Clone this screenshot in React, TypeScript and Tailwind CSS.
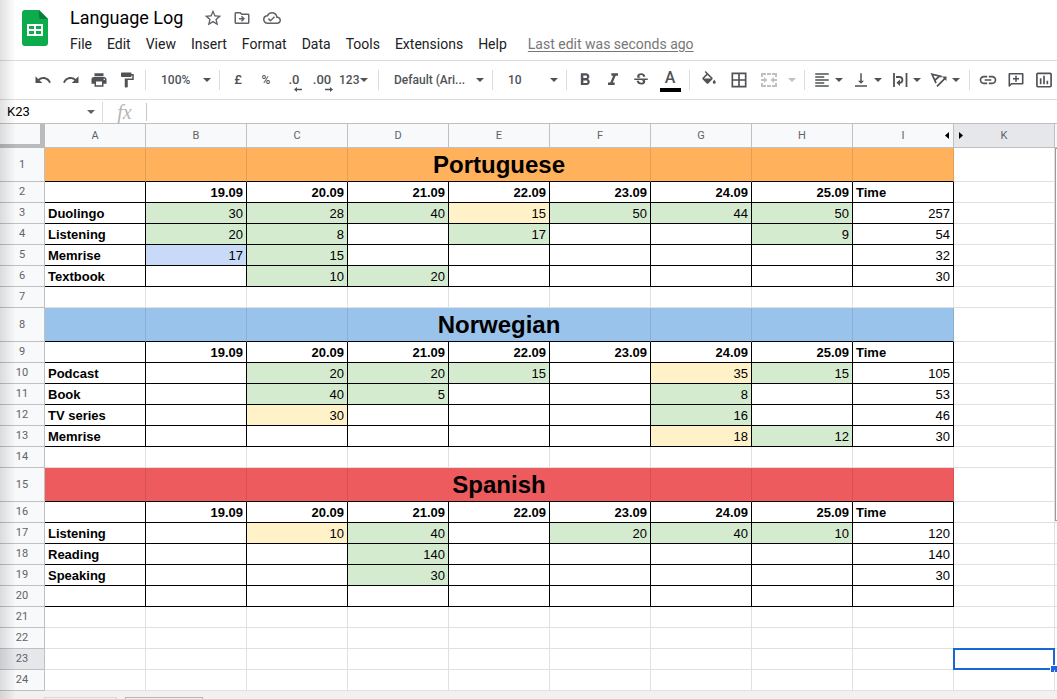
import React, { useState } from 'react';
import {
  MdUndo,
  MdRedo,
  MdPrint,
  MdFormatPaint,
  MdFormatBold,
  MdFormatItalic,
  MdStrikethroughS,
  MdBorderAll,
  MdFormatAlignLeft,
  MdVerticalAlignBottom,
  MdLink,
  MdStarBorder,
  MdOutlineDriveFileMove,
  MdOutlineCloudDone,
  MdInsertChartOutlined,
} from 'react-icons/md';

type Tone = 'g' | 'y' | 'b';
type Entry = [number, Tone] | null;

interface LogRow {
  label: string;
  entries: Entry[];
  total?: number;
}

interface Section {
  title: string;
  color: string;
  rows: LogRow[];
}

const TONES: Record<Tone, string> = {
  g: 'bg-[#d5ebd0]',
  y: 'bg-[#fff2c8]',
  b: 'bg-[#c9daf8]',
};

const DATES = ['19.09', '20.09', '21.09', '22.09', '23.09', '24.09', '25.09'];
const COLUMNS = ['A', 'B', 'C', 'D', 'E', 'F', 'G', 'H', 'I', 'K'];
const MENUS = ['File', 'Edit', 'View', 'Insert', 'Format', 'Data', 'Tools', 'Extensions', 'Help'];

const SECTIONS: Section[] = [
  {
    title: 'Portuguese',
    color: 'bg-[#ffb15c]',
    rows: [
      { label: 'Duolingo', entries: [[30, 'g'], [28, 'g'], [40, 'g'], [15, 'y'], [50, 'g'], [44, 'g'], [50, 'g']], total: 257 },
      { label: 'Listening', entries: [[20, 'g'], [8, 'g'], null, [17, 'g'], null, null, [9, 'g']], total: 54 },
      { label: 'Memrise', entries: [[17, 'b'], [15, 'g'], null, null, null, null, null], total: 32 },
      { label: 'Textbook', entries: [null, [10, 'g'], [20, 'g'], null, null, null, null], total: 30 },
    ],
  },
  {
    title: 'Norwegian',
    color: 'bg-[#99c3ea]',
    rows: [
      { label: 'Podcast', entries: [null, [20, 'g'], [20, 'g'], [15, 'g'], null, [35, 'y'], [15, 'g']], total: 105 },
      { label: 'Book', entries: [null, [40, 'g'], [5, 'g'], null, null, [8, 'g'], null], total: 53 },
      { label: 'TV series', entries: [null, [30, 'y'], null, null, null, [16, 'g'], null], total: 46 },
      { label: 'Memrise', entries: [null, null, null, null, null, [18, 'y'], [12, 'g']], total: 30 },
    ],
  },
  {
    title: 'Spanish',
    color: 'bg-[#ee5b5e]',
    rows: [
      { label: 'Listening', entries: [null, [10, 'y'], [40, 'g'], null, [20, 'g'], [40, 'g'], [10, 'g']], total: 120 },
      { label: 'Reading', entries: [null, null, [140, 'g'], null, null, null, null], total: 140 },
      { label: 'Speaking', entries: [null, null, [30, 'g'], null, null, null, null], total: 30 },
      { label: '', entries: [null, null, null, null, null, null, null] },
    ],
  },
];

const plainCell = 'p-0 border-r border-b border-[#e0e0e0]';
const inkCell = 'px-[3px] pt-0.5 pb-0 border-r border-b border-black leading-[18px]';

const Caret = ({ className = '' }: { className?: string }) => (
  <svg viewBox="0 0 8 4" className={`w-2 h-1 shrink-0 fill-current ${className}`} aria-hidden="true">
    <path d="M0 0h8L4 4z" />
  </svg>
);

const Divider = () => <div className="w-px h-5 mx-1 shrink-0 bg-[#dadce0]" />;

interface ToolProps {
  label: string;
  wide?: boolean;
  children: React.ReactNode;
}

const Tool = ({ label, wide, children }: ToolProps) => (
  <button
    aria-label={label}
    className={`${wide ? 'w-[30px]' : 'w-7'} h-7 shrink-0 flex items-center justify-center rounded-sm hover:bg-gray-100`}
  >
    {children}
  </button>
);

const MenuTool = ({ label, children }: ToolProps) => (
  <button aria-label={label} className="w-[39px] h-7 pl-1 gap-1 shrink-0 flex items-center rounded-sm hover:bg-gray-100">
    {children}
    <Caret />
  </button>
);

interface PickerProps {
  label: string;
  value: string;
  options: string[];
  width: string;
  onChange: (value: string) => void;
}

const Picker = ({ label, value, options, width, onChange }: PickerProps) => (
  <div className={`relative h-7 shrink-0 flex items-center ${width}`}>
    <select
      aria-label={label}
      value={value}
      onChange={(e) => onChange(e.target.value)}
      className="appearance-none w-full h-full pl-[11px] pr-4 bg-transparent text-xs font-medium"
    >
      {options.map((o) => (
        <option key={o}>{o}</option>
      ))}
    </select>
    <Caret className="absolute right-1 pointer-events-none" />
  </div>
);

const DecimalIcon = ({ text, increase }: { text: string; increase?: boolean }) => (
  <span className="relative text-[13px] leading-5 font-medium">
    {text}
    <svg viewBox="0 0 8 5" className="absolute -right-0.5 -bottom-0.5 w-2 h-[5px] fill-current">
      {increase ? <path d="M5 0l3 2.5L5 5V3.3H0V1.7h5z" /> : <path d="M3 0L0 2.5 3 5V3.3h5V1.7H3z" />}
    </svg>
  </span>
);

const FillIcon = () => (
  <svg viewBox="0 0 24 24" className="w-[18px] h-[18px] fill-current">
    <path d="M16.560 8.940L7.620 0 6.210 1.410l2.380 2.380-5.150 5.150c-.59.59-.59 1.540 0 2.120l5.500 5.500c.29.29.68.44 1.060.44s.77-.15 1.060-.44l5.500-5.500c.59-.58.59-1.530 0-2.120zM5.210 10L10 5.210 14.790 10zM19 11.500s-2 2.170-2 3.500a2 2 0 004 0c0-1.330-2-3.500-2-3.500z" />
  </svg>
);

const MergeIcon = () => (
  <svg viewBox="0 0 18 18" className="w-[18px] h-[18px] fill-current">
    <path d="M1 2h5v2H3v2H1zM7 2h4v2H7zM12 2h5v4h-2V4h-3zM1 12h2v2h3v2H1zM7 14h4v2H7zM12 14h3v-2h2v4h-5z" />
    <path d="M1 8h3V6l3.500 3L4 12v-2H1zM17 8h-3V6l-3.500 3 3.500 3v-2h3z" />
  </svg>
);

const WrapIcon = () => (
  <svg viewBox="0 0 18 18" className="w-[18px] h-[18px] shrink-0" fill="none" stroke="currentColor" strokeWidth="1.800">
    <path d="M3 2v14M15.500 2v14M5 6h3.500a2.800 2.800 0 010 5.800H7.500" />
    <path d="M9 8.500v6.600L5.400 11.800z" fill="currentColor" stroke="none" />
  </svg>
);

const RotateIcon = () => (
  <svg viewBox="0 0 18 18" className="w-[18px] h-[18px] shrink-0" fill="none" stroke="currentColor" strokeWidth="1.700">
    <path d="M11.800 5.600L2 3.200l4 9M9.200 5.300l-4.600 4.200M7 15.300l8-8" />
    <path d="M16.500 5.500v4.600l-4.600-4.600z" fill="currentColor" stroke="none" />
  </svg>
);

const CommentIcon = () => (
  <svg viewBox="0 0 18 18" className="w-[18px] h-[18px]" fill="none" stroke="currentColor" strokeWidth="1.600">
    <path d="M2.300 15V2.800h13.400v9.900H4.500z" strokeLinejoin="round" />
    <path d="M9 4.800v6M6 7.800h6" />
  </svg>
);

const SheetsLogo = () => (
  <svg viewBox="0 0 26 36" className="w-[26px] h-9 shrink-0">
    <path d="M3 0h14l9 9v24a3 3 0 01-3 3H3a3 3 0 01-3-3V3a3 3 0 013-3z" fill="#0cac4c" />
    <path d="M17 0l9 9h-7a2 2 0 01-2-2z" fill="#087f38" />
    <path d="M5 14h16v12H5zM7 16v3h5v-3zm7 0v3h5v-3zM7 21v3h5v-3zm7 0v3h5v-3z" fill="#fff" fillRule="evenodd" />
  </svg>
);

const Header = () => {
  const [name, setName] = useState('Language Log');

  return (
    <header className="flex h-[61px] shrink-0 border-b border-[#dadce0] pl-[22px] pt-2.5">
      <SheetsLogo />
      <div className="ml-[22px] -mt-1 min-w-0">
        <div className="flex items-center gap-2.5 h-6 text-[#5f6368]">
          <input
            aria-label="Document name"
            value={name}
            onChange={(e) => setName(e.target.value)}
            className="w-[123px] text-lg leading-6 text-black bg-transparent"
          />
          <button aria-label="Star"><MdStarBorder size={20} /></button>
          <button aria-label="Move"><MdOutlineDriveFileMove size={18} /></button>
          <button aria-label="Saved to drive" className="ml-0.5"><MdOutlineCloudDone size={18} /></button>
        </div>
        <nav className="flex items-center gap-[15px] h-5 mt-1 text-sm text-[#202124] whitespace-nowrap">
          {MENUS.map((m) => (
            <button key={m}>{m}</button>
          ))}
          <a href="#history" className="ml-1.5 text-[#777] underline underline-offset-2">
            Last edit was seconds ago
          </a>
        </nav>
      </div>
    </header>
  );
};

const Toolbar = () => {
  const [zoom, setZoom] = useState('100%');
  const [font, setFont] = useState('Default (Ari...');
  const [size, setSize] = useState('10');

  return (
    <div className="flex items-center h-[39px] shrink-0 pl-[29px] border-b border-[#dadce0] overflow-hidden text-[#4f5357] font-medium">
      <Tool label="Undo"><MdUndo size={18} /></Tool>
      <Tool label="Redo"><MdRedo size={18} /></Tool>
      <Tool label="Print"><MdPrint size={18} /></Tool>
      <Tool label="Paint format"><MdFormatPaint size={18} /></Tool>
      <Divider />
      <Picker label="Zoom" value={zoom} options={['50%', '100%', '150%']} width="w-[65px]" onChange={setZoom} />
      <Divider />
      <Tool label="Format as currency"><span className="text-[13px]">£</span></Tool>
      <Tool label="Format as percent"><span className="text-xs">%</span></Tool>
      <Tool label="Decrease decimal places"><DecimalIcon text=".0" /></Tool>
      <Tool label="Increase decimal places"><DecimalIcon text=".00" increase /></Tool>
      <button aria-label="More formats" className="w-[38px] h-7 pl-[3px] shrink-0 flex items-center gap-px text-xs font-medium">
        123
        <Caret />
      </button>
      <Divider />
      <Picker label="Font" value={font} options={['Default (Ari...', 'Roboto', 'Lato']} width="w-[105px]" onChange={setFont} />
      <Divider />
      <Picker label="Font size" value={size} options={['8', '10', '12', '14']} width="w-[65px]" onChange={setSize} />
      <Divider />
      <Tool label="Bold"><MdFormatBold size={20} /></Tool>
      <Tool label="Italic"><MdFormatItalic size={20} /></Tool>
      <Tool label="Strikethrough"><MdStrikethroughS size={18} /></Tool>
      <Tool label="Text color" wide>
        <span className="w-[21px] h-6 border-b-4 border-black text-base leading-5">A</span>
      </Tool>
      <Divider />
      <Tool label="Fill color" wide><FillIcon /></Tool>
      <Tool label="Borders" wide><MdBorderAll size={20} /></Tool>
      <div className="flex text-[#bfc1c4]">
        <Tool label="Merge cells" wide><MergeIcon /></Tool>
        <button aria-label="Merge type" className="w-4 h-7 flex items-center justify-center"><Caret /></button>
      </div>
      <Divider />
      <MenuTool label="Horizontal align"><MdFormatAlignLeft size={18} className="shrink-0" /></MenuTool>
      <MenuTool label="Vertical align"><MdVerticalAlignBottom size={18} className="shrink-0" /></MenuTool>
      <MenuTool label="Text wrapping"><WrapIcon /></MenuTool>
      <MenuTool label="Text rotation"><RotateIcon /></MenuTool>
      <Divider />
      <Tool label="Insert link"><MdLink size={20} /></Tool>
      <Tool label="Insert comment"><CommentIcon /></Tool>
      <Tool label="Insert chart"><MdInsertChartOutlined size={20} /></Tool>
    </div>
  );
};

const FormulaBar = () => {
  const [cell, setCell] = useState('K23');
  const [formula, setFormula] = useState('');

  return (
    <div className="flex items-center h-6 shrink-0 border-b border-[#c0c0c0]">
      <input
        aria-label="Name box"
        value={cell}
        onChange={(e) => setCell(e.target.value)}
        className="w-[87px] pl-[7px] text-[13px] leading-5 text-black bg-transparent"
      />
      <button aria-label="Named ranges" className="w-[15px] text-[#5f6368]"><Caret /></button>
      <div className="w-px h-5 bg-[#dadce0]" />
      <label htmlFor="formula" className="w-[43px] text-center font-['Liberation_Serif',serif] italic text-xl leading-5 text-[#b5b5b5]">
        fx
      </label>
      <div className="w-px h-[18px] bg-[#c8c8c8]" />
      <input
        id="formula"
        value={formula}
        onChange={(e) => setFormula(e.target.value)}
        className="flex-1 min-w-0 px-2 text-[13px] leading-5 bg-transparent"
      />
    </div>
  );
};

const RowHead = ({ n }: { n: number }) => (
  <th
    scope="row"
    className={`p-0 border-r border-b border-[#c0c0c0] text-[11px] font-normal text-[#5f6368] font-[Roboto,sans-serif] ${n === 23 ? 'bg-[#e6e7eb]' : 'bg-[#f8f9fa]'}`}
  >
    {n}
  </th>
);

// Columns past the log stay empty
const Outside = ({ selected = false }: { selected?: boolean }) => (
  <>
    <td className={`${plainCell} relative`}>
      {selected && (
        <div className="absolute -inset-px border-2 border-[#1967d2]">
          <div className="absolute -right-1 -bottom-1 w-[7px] h-[7px] border-l border-t border-white bg-[#1a66e8]" />
        </div>
      )}
    </td>
    <td className={plainCell} />
  </>
);

const BlankRow = ({ n }: { n: number }) => (
  <tr className="h-[21px]">
    <RowHead n={n} />
    {COLUMNS.slice(0, 9).map((c) => (
      <td key={c} className={plainCell} />
    ))}
    <Outside selected={n === 23} />
  </tr>
);

const SectionRows = ({ section, start }: { section: Section; start: number }) => {
  const bar = `p-0 border-r border-b border-b-black border-r-black/10 ${section.color}`;

  return (
    <>
      <tr className="h-[34px]">
        <RowHead n={start} />
        <td className={bar} />
        <td className={bar} />
        <td className={bar} />
        <td colSpan={3} className={`${bar} text-center text-2xl font-bold leading-8`}>{section.title}</td>
        <td className={bar} />
        <td className={bar} />
        <td className={bar} />
        <Outside />
      </tr>
      <tr className="h-[21px] font-bold">
        <RowHead n={start + 1} />
        <td className={inkCell} />
        {DATES.map((d) => (
          <td key={d} className={`${inkCell} text-right`}>{d}</td>
        ))}
        <td className={inkCell}>Time</td>
        <Outside />
      </tr>
      {section.rows.map((row, i) => (
        <tr key={i} className="h-[21px]">
          <RowHead n={start + 2 + i} />
          <td className={`${inkCell} font-bold`}>{row.label}</td>
          {row.entries.map((entry, j) => (
            <td key={j} className={`${inkCell} text-right ${entry ? TONES[entry[1]] : ''}`}>{entry?.[0]}</td>
          ))}
          <td className={`${inkCell} text-right`}>{row.total}</td>
          <Outside />
        </tr>
      ))}
    </>
  );
};

const Sheet = () => (
  <main className="relative flex-1 min-h-0 overflow-hidden">
    <table className="table-fixed w-[1156px] border-separate border-spacing-0 font-['Liberation_Sans',Arial,sans-serif] text-[13px] leading-5 text-black">
      <colgroup>
        <col className="w-[45px]" />
        {COLUMNS.map((c) => (
          <col key={c} className="w-[101px]" />
        ))}
        <col className="w-[101px]" />
      </colgroup>
      <thead>
        <tr className="h-6">
          <th aria-label="Select all" className="p-0 border-r-[5px] border-b-4 border-[#b9bbbd] bg-[#f8f9fa]" />
          {COLUMNS.map((c) => (
            <th
              key={c}
              scope="col"
              className={`relative p-0 border-r border-b border-[#c0c0c0] text-[11px] font-normal text-[#5f6368] font-[Roboto,sans-serif] ${c === 'K' ? 'bg-[#e6e7eb]' : 'bg-[#f8f9fa]'}`}
            >
              {c}
              {c === 'I' && (
                <button aria-label="Show column J before" className="absolute right-1 top-2">
                  <svg viewBox="0 0 4 7" className="w-1 h-[7px]"><path d="M4 0v7L0 3.500z" /></svg>
                </button>
              )}
              {c === 'K' && (
                <button aria-label="Show column J after" className="absolute left-[5px] top-2">
                  <svg viewBox="0 0 4 7" className="w-1 h-[7px]"><path d="M0 0v7l4-3.500z" /></svg>
                </button>
              )}
            </th>
          ))}
          <td className="p-0 border-b border-[#c0c0c0] bg-[#f8f9fa]" />
        </tr>
      </thead>
      <tbody>
        <SectionRows section={SECTIONS[0]} start={1} />
        <BlankRow n={7} />
        <SectionRows section={SECTIONS[1]} start={8} />
        <BlankRow n={14} />
        <SectionRows section={SECTIONS[2]} start={15} />
        {[21, 22, 23, 24].map((n) => (
          <BlankRow key={n} n={n} />
        ))}
      </tbody>
    </table>
    {/* Scrollbar thumb */}
    <div className="absolute right-0 top-6 w-0.5 h-[373px] border-l border-y border-[#9a9a9a] bg-white" />
  </main>
);

const App: React.FC = () => (
  <div className="relative flex flex-col h-screen overflow-hidden bg-white font-[Roboto,sans-serif]">
    <Header />
    <Toolbar />
    <FormulaBar />
    <Sheet />
    <footer className="flex gap-2 h-2 shrink-0 pl-11 pt-1.5 bg-[#f1f1f1]">
      <div className="w-[73px] border-t border-x border-[#d8d8d8]" />
      <div className="w-[78px] border-t border-x border-[#b8b8b8]" />
    </footer>
    {/* Soft shade along the window's left edge */}
    <div className="absolute inset-y-0 left-0 w-4 bg-linear-to-r from-black/12 to-transparent pointer-events-none" />
  </div>
);

export default App;
